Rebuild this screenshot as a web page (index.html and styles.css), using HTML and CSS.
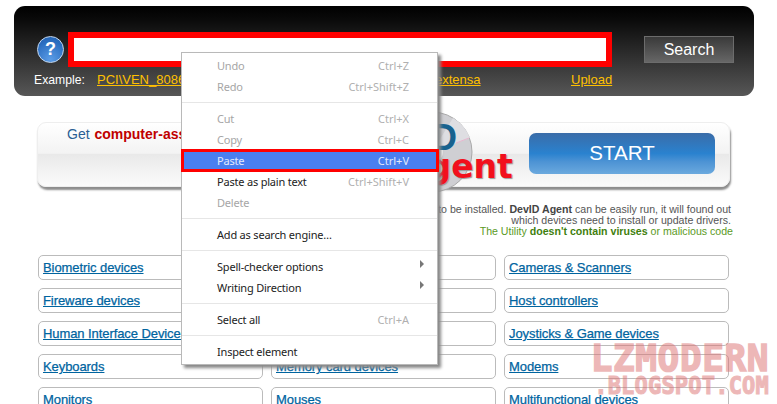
FILE: index.html
```html
<!DOCTYPE html>
<html lang="en">
<head>
<meta charset="utf-8">
<title>DevID</title>
<link rel="stylesheet" href="styles.css">
</head>
<body>
<header class="bar">
  <div class="bar-main">
    <div class="help">?</div>
    <div class="field"><div class="field-in"></div></div>
    <div class="search">Search</div>
  </div>
  <div class="examples">
    <span class="ex-label">Example:</span>
    <a class="ex-link ex-pci">PCI\VEN_8086&amp;DEV_2E22</a>
    <a class="ex-link ex-ext">extensa</a>
    <a class="ex-link ex-up">Upload</a>
  </div>
</header>
<section class="promo">
  <div class="promo-text">Get <b>computer-assisted</b></div>
  <div class="disc-zone">
    <svg class="disc" width="82" height="82" viewBox="0 0 82 82">
      <circle cx="41" cy="41" r="40" fill="#cfcfd3" stroke="#a9a9a9"/>
      <path d="M41 41 L79 27 A40 40 0 0 0 62 7 Z" fill="#dedee2"/>
      <path d="M65 32 L78 27" stroke="#e7b7cf" stroke-width="1"/>
      <circle cx="41" cy="41" r="11" fill="#f4f4f4"/>
    </svg>
    <span class="disc-d">D</span>
    <span class="disc-agent">Agent</span>
  </div>
  <div class="start">START</div>
</section>
<section class="note">
  <p class="note-line">No need to be installed. <b>DevID Agent</b> can be easily run, it will found out</p>
  <p class="note-line">which devices need to install or update drivers.</p>
  <p class="note-line note-green">The Utility <b>doesn't contain viruses</b> or malicious code</p>
</section>
<nav class="cats">
  <a class="cat"><span>Biometric devices</span></a>
  <a class="cat"><span>CD / DVD devices</span></a>
  <a class="cat"><span>Cameras &amp; Scanners</span></a>
  <a class="cat"><span>Fireware devices</span></a>
  <a class="cat"><span>Hard disk devices</span></a>
  <a class="cat"><span>Host controllers</span></a>
  <a class="cat"><span>Human Interface Devices</span></a>
  <a class="cat"><span>IDE controllers</span></a>
  <a class="cat"><span>Joysticks &amp; Game devices</span></a>
  <a class="cat"><span>Keyboards</span></a>
  <a class="cat"><span>Memory card devices</span></a>
  <a class="cat"><span>Modems</span></a>
  <a class="cat"><span>Monitors</span></a>
  <a class="cat"><span>Mouses</span></a>
  <a class="cat"><span>Multifunctional devices</span></a>
</nav>
<div class="menu">
  <div class="mi off"><span>Undo</span><span class="key">Ctrl+Z</span></div>
  <div class="mi off"><span>Redo</span><span class="key">Ctrl+Shift+Z</span></div>
  <div class="sep"></div>
  <div class="mi off"><span>Cut</span><span class="key">Ctrl+X</span></div>
  <div class="mi off"><span>Copy</span><span class="key">Ctrl+C</span></div>
  <div class="mi sel"><span>Paste</span><span class="key">Ctrl+V</span></div>
  <div class="mi"><span>Paste as plain text</span><span class="key">Ctrl+Shift+V</span></div>
  <div class="mi off"><span>Delete</span></div>
  <div class="sep"></div>
  <div class="mi"><span>Add as search engine…</span></div>
  <div class="sep"></div>
  <div class="mi"><span>Spell-checker options</span><i class="arrow"></i></div>
  <div class="mi"><span>Writing Direction</span><i class="arrow"></i></div>
  <div class="sep"></div>
  <div class="mi"><span>Select all</span><span class="key">Ctrl+A</span></div>
  <div class="sep"></div>
  <div class="mi"><span>Inspect element</span></div>
</div>
<div class="mark">
  <div class="mark-a">LZMODERN</div>
  <div class="mark-b">.BLOGSPOT.COM</div>
</div>
</body>
</html>
```
FILE: styles.css
```css
* { box-sizing: border-box; }
html, body { margin: 0; padding: 0; }
body {
  width: 777px; height: 404px; overflow: hidden; position: relative;
  background: #fff; font-family: "Liberation Sans", Arial, sans-serif;
}
.bar {
  width: 740px; height: 90px; margin: 6px 0 0 14px; padding: 26px 20px 0 23px;
  border-radius: 11px;
  background: linear-gradient(#000 0, #0a0a0a 15%, #575757 100%);
}
.bar-main { display: flex; align-items: center; height: 35px; }
.help {
  width: 27px; height: 27px; border-radius: 50%; flex: none;
  background: radial-gradient(circle at 50% 90%, #5b9ce6, #2a6dc0 70%, #2562b0);
  border: 1.5px solid #c4d8f0; color: #fff; font: bold 18px/24px "Liberation Sans", sans-serif; text-align: center;
}
.field {
  width: 544px; height: 35px; margin-left: 4px; flex: none;
  border: 6px solid #f00; background: #fff;
}
.field-in { height: 100%; }
.search {
  width: 90px; height: 27px; margin-left: 32px; flex: none;
  background: linear-gradient(#3a3a3a, #666); border: 1px solid #6c6c6c;
  color: #fff; font-size: 16px; line-height: 25px; text-align: center;
}
.examples { display: flex; align-items: baseline; height: 24px; padding-top: 5px; font-size: 13px; line-height: 15px; margin-left: -3px; }
.ex-label { color: #fff; width: 63px; font-size: 12.2px; }
.ex-link { color: #ffc000; text-decoration: underline; white-space: nowrap; }
.ex-pci { width: 338px; }
.ex-ext { width: 136px; }
.promo {
  position: relative; width: 693px; height: 65px; margin: 26px 0 0 37px;
  border-radius: 9px; box-shadow: 1px 3px 2px #8d8d8d;
  background: linear-gradient(#fff 0, #f3f3f3 48%, #e9e9e9 50%, #fbfbfb 100%);
  border: 1px solid #eee;
}
.promo-text { padding: 3px 0 0 29px; font-size: 14px; line-height: 16px; color: #2a5f94; }
.promo-text b { color: #c00000; margin-left: 1px; }
.disc-zone { position: absolute; left: 370px; top: -3px; width: 105px; height: 70px; }
.disc { position: absolute; left: -17px; top: -9px; }
.disc-d { position: absolute; left: 23px; top: -2px; font: bold 36px/40px "Liberation Sans", sans-serif; color: #17628f; }
.disc-agent { position: absolute; left: -6px; top: 29px; font: bold 33px/36px "DejaVu Sans", sans-serif; color: #f2101c; text-shadow: 1px 1px 1px #999; }
.start {
  position: absolute; left: 491px; top: 10px; width: 186px; height: 41px; border-radius: 7px;
  background: linear-gradient(#3a6ca8 0, #2a82cf 50%, #4d93d4 70%, #6ba9de 100%);
  color: #fff; font-size: 20.5px; line-height: 39px; text-align: center;
}
.note { width: 731px; margin-top: 17px; text-align: right; font-size: 10.6px; line-height: 11px; color: #555; }
.note-line { margin: 0; height: 11px; white-space: nowrap; }
.note-line b { color: #444; }
.note-green { color: #5b9a1e; margin-right: -2px; }
.note-green b { color: #3f7f0e; }
.cats {
  display: grid; grid-template-columns: 225px 225px 225px; column-gap: 8px; row-gap: 8px;
  margin: 18px 0 0 38px; width: 691px; grid-auto-rows: 25px;
}
.cat {
  display: block; border: 1px solid #bbb; border-radius: 5px; padding: 1px 0 0 4px;
  font-size: 13px; line-height: 22px; color: #00649f; white-space: nowrap; overflow: hidden;
  letter-spacing: -0.08px; -webkit-text-stroke: 0.25px #00649f;
}
.cat span { text-decoration: underline; }
.menu {
  position: absolute; left: 181px; top: 52px; width: 257px; height: 313px; padding: 2px 0 0;
  background: #fff; border: 1px solid #b9b9b9; box-shadow: 3px 3px 3px #888;
  font: 11px/21px "Noto Sans", "Open Sans", sans-serif; color: #222;
}
.mi { display: flex; justify-content: space-between; align-items: center; position: relative; height: 21px; padding: 0 28px 0 35px; white-space: nowrap; letter-spacing: -0.2px; }
.key { color: #b0b0b0; letter-spacing: 0; }
.off { color: #a6a6a6; }
.sel { background: #4a7ff0; color: #e3eafb; outline: 3px solid #f00; outline-offset: -2px; margin-right: -1px; padding: 0 29px 0 35px; }
.sel .key { color: #e3eafb; }
.sep { height: 1px; margin: 5px 0; background: #e6e6e6; }
.arrow { position: absolute; right: 13px; top: 4px; width: 0; height: 0; border-left: 4px solid #777; border-top: 4px solid transparent; border-bottom: 4px solid transparent; }
.mark {
  position: absolute; left: 589px; top: 343px; width: 180px; text-align: right;
  color: #dc7272; opacity: .5; font-family: "DejaVu Sans Mono", monospace; font-weight: bold;
  text-shadow: 0 0 2px #fff; -webkit-text-stroke: 1.5px #dc7272;
}
.mark-a { font-size: 36px; line-height: 32px; letter-spacing: 0.6px; transform: scaleY(1.04); }
.mark-b { font-size: 22px; line-height: 21px; letter-spacing: 0.2px; transform: scaleY(1.15); -webkit-text-stroke-width: 1px; }
```
